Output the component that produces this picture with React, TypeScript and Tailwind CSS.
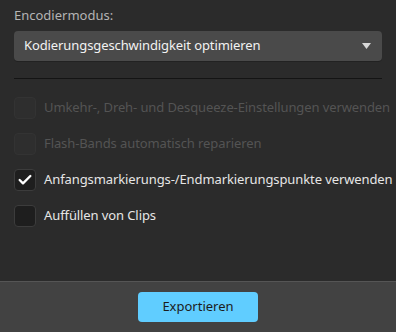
import { Check } from "lucide-react";

const OPTIONS = [
  { label: "Umkehr-, Dreh- und Desqueeze-Einstellungen verwenden", checked: false, disabled: true },
  { label: "Flash-Bands automatisch reparieren", checked: false, disabled: true },
  { label: "Anfangsmarkierungs-/Endmarkierungspunkte verwenden", checked: true, disabled: false },
  { label: "Auffüllen von Clips", checked: false, disabled: false },
];

export default function App() {
  return (
    <div
      className="w-[396px] h-[332px] flex flex-col bg-[#2b2b2b] text-[13px] overflow-hidden"
      style={{ fontFamily: '"Noto Sans", "Open Sans", sans-serif' }}
    >
      <div className="flex-1 px-[14px] pt-[6px]">
        <div className="text-[#b4b4b4] leading-[18px]">Encodiermodus:</div>
        <div className="mt-[7px] h-[30px] w-[368px] rounded-[4px] bg-[#4a4a4a] flex items-center justify-between pl-[10px] pr-[10px] shadow-[0_1px_0_#222]">
          <span className="text-[#f2f2f2] tracking-[-0.1px]">Kodierungsgeschwindigkeit optimieren</span>
          <svg width="9" height="6" viewBox="0 0 9 6" className="mr-[1px]">
            <path d="M0 0 H9 L4.5 6 Z" fill="#d8d8d8" />
          </svg>
        </div>
        <div className="mt-[17px] h-[1px] w-[368px] bg-[#141414]" />
        <ul className="mt-[18px] flex flex-col gap-[14px]">
          {OPTIONS.map((o) => (
            <li key={o.label} className="flex items-center gap-[8px] h-[22px]">
              <div
                className={
                  o.disabled
                    ? "shrink-0 w-[22px] h-[22px] rounded-[4px] bg-[#2e2e2e] border border-[#333333] flex items-center justify-center"
                    : "shrink-0 w-[22px] h-[22px] rounded-[4px] bg-[#1e1e1e] border border-[#3c3c3c] flex items-center justify-center"
                }
              >
                {o.checked && <Check className="w-[16px] h-[16px] text-white" strokeWidth={3.5} />}
              </div>
              <span
                className={
                  o.disabled
                    ? "text-[#545454] whitespace-nowrap tracking-[-0.1px]"
                    : "text-[#e6e6e6] whitespace-nowrap tracking-[-0.1px]"
                }
              >
                {o.label}
              </span>
            </li>
          ))}
        </ul>
      </div>
      <div className="h-[51px] bg-[#424242] border-t border-[#555555] flex items-center justify-center">
        <button className="w-[120px] h-[30px] rounded-[4px] bg-[#60cdff] text-[#1c1c1c] mb-[1px]">
          Exportieren
        </button>
      </div>
    </div>
  );
}
